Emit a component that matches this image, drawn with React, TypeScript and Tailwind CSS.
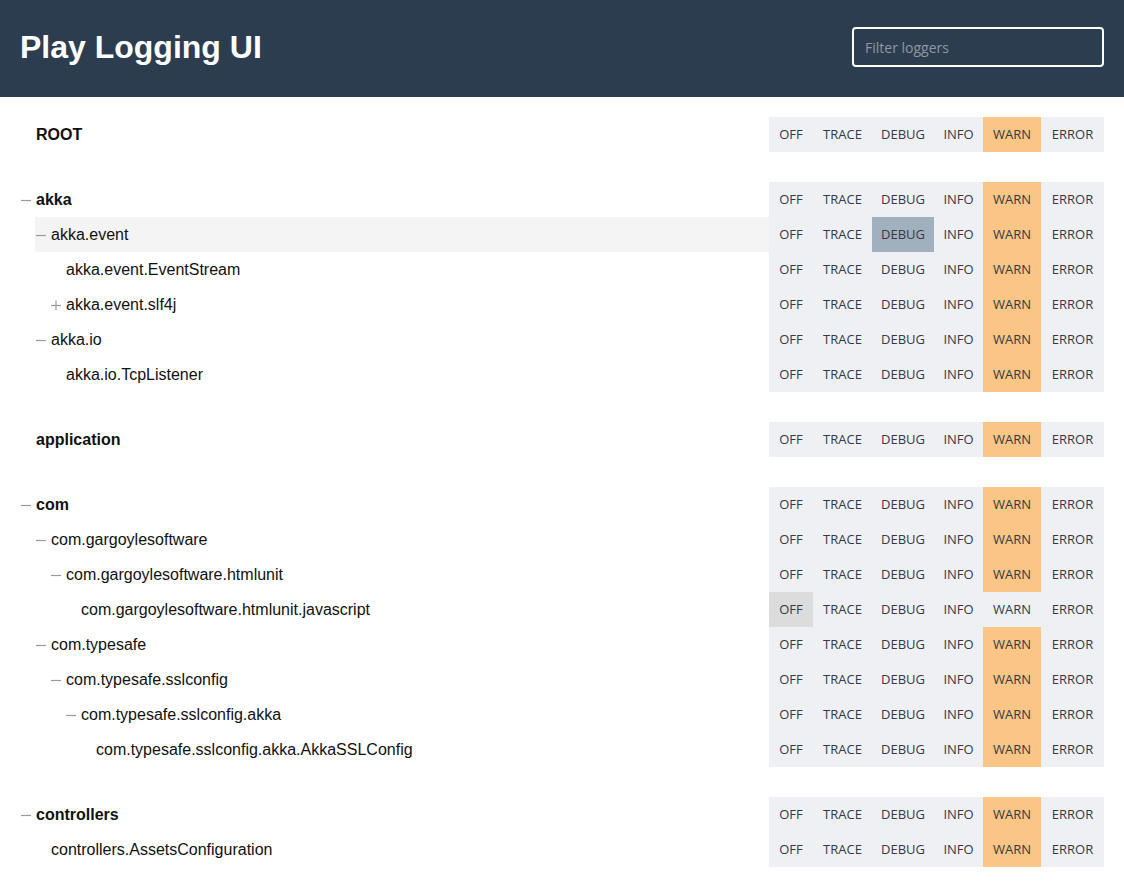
import React from 'react'

type Level = 'OFF' | 'TRACE' | 'DEBUG' | 'INFO' | 'WARN' | 'ERROR'

const LEVELS: { name: Level; w: string }[] = [
  { name: 'OFF', w: 'w-[44px]' },
  { name: 'TRACE', w: 'w-[59px]' },
  { name: 'DEBUG', w: 'w-[62px]' },
  { name: 'INFO', w: 'w-[49px]' },
  { name: 'WARN', w: 'w-[58px]' },
  { name: 'ERROR', w: 'w-[63px]' },
]

type Logger = {
  name: string
  depth: number
  toggle?: 'minus' | 'plus'
  level: Level
  effective?: Level
  hover?: boolean
}

const groups: Logger[][] = [
  [{ name: 'ROOT', depth: 0, level: 'WARN' }],
  [
    { name: 'akka', depth: 0, toggle: 'minus', level: 'WARN' },
    { name: 'akka.event', depth: 1, toggle: 'minus', level: 'WARN', effective: 'DEBUG', hover: true },
    { name: 'akka.event.EventStream', depth: 2, level: 'WARN' },
    { name: 'akka.event.slf4j', depth: 2, toggle: 'plus', level: 'WARN' },
    { name: 'akka.io', depth: 1, toggle: 'minus', level: 'WARN' },
    { name: 'akka.io.TcpListener', depth: 2, level: 'WARN' },
  ],
  [{ name: 'application', depth: 0, level: 'WARN' }],
  [
    { name: 'com', depth: 0, toggle: 'minus', level: 'WARN' },
    { name: 'com.gargoylesoftware', depth: 1, toggle: 'minus', level: 'WARN' },
    { name: 'com.gargoylesoftware.htmlunit', depth: 2, toggle: 'minus', level: 'WARN' },
    { name: 'com.gargoylesoftware.htmlunit.javascript', depth: 3, level: 'OFF' },
    { name: 'com.typesafe', depth: 1, toggle: 'minus', level: 'WARN' },
    { name: 'com.typesafe.sslconfig', depth: 2, toggle: 'minus', level: 'WARN' },
    { name: 'com.typesafe.sslconfig.akka', depth: 3, toggle: 'minus', level: 'WARN' },
    { name: 'com.typesafe.sslconfig.akka.AkkaSSLConfig', depth: 4, level: 'WARN' },
  ],
  [
    { name: 'controllers', depth: 0, toggle: 'minus', level: 'WARN' },
    { name: 'controllers.AssetsConfiguration', depth: 1, level: 'WARN' },
  ],
]

const indent = ['ml-0', 'ml-[15px]', 'ml-[30px]', 'ml-[45px]', 'ml-[60px]']

function Toggle({ kind }: { kind?: 'minus' | 'plus' }) {
  return (
    <span className="flex w-[16px] shrink-0 items-center pl-[1px]">
      {kind && (
        <svg width="10" height="10" viewBox="0 0 10 10" className="mt-[1px]">
          <path d="M0 5.5h10" stroke="#9a9a9a" strokeWidth="1.2" />
          {kind === 'plus' && <path d="M5 0.5v10" stroke="#9a9a9a" strokeWidth="1.2" />}
        </svg>
      )}
    </span>
  )
}

function LevelButtons({ level, effective }: { level: Level; effective?: Level }) {
  return (
    <div className="flex h-[35px] bg-[#eff0f4] font-['Open_Sans',sans-serif] text-[13px] text-[#343a44]">
      {LEVELS.map(({ name, w }) => {
        let bg = ''
        if (name === level) bg = name === 'OFF' ? 'bg-[#dcdcdc]' : 'bg-[#fbc585]'
        if (name === effective) bg = 'bg-[#a1b0bf]'
        return (
          <span key={name} className={`flex items-center justify-center ${w} ${bg}`}>
            {name}
          </span>
        )
      })}
    </div>
  )
}

function Row({ logger }: { logger: Logger }) {
  const bold = logger.depth === 0
  return (
    <div className="flex items-stretch">
      <div
        className={`flex flex-1 items-center ${indent[logger.depth]} ${logger.hover ? 'bg-[#f4f4f4]' : ''}`}
      >
        <Toggle kind={logger.toggle} />
        <span className={`text-[16px] text-[#111] ${bold ? 'font-bold' : ''}`}>{logger.name}</span>
      </div>
      <LevelButtons level={logger.level} effective={logger.effective} />
    </div>
  )
}

export default function App() {
  return (
    <div className="min-h-[888px] bg-white font-['Liberation_Sans',Arial,sans-serif]">
      <header className="flex h-[97px] items-center justify-between bg-[#2d3d50] px-5 pb-[3px]">
        <h1 className="text-[32px] font-bold text-white">Play Logging UI</h1>
        <input
          placeholder="Filter loggers"
          className="h-[40px] w-[252px] rounded-[4px] border-2 border-white bg-transparent px-[11px] font-['Open_Sans',sans-serif] text-[14px] text-white placeholder:text-[#8f98a2] outline-none"
        />
      </header>
      <main className="flex flex-col gap-[30px] px-5 pt-5">
        {groups.map((g, i) => (
          <div key={i} className="flex flex-col">
            {g.map((l) => (
              <Row key={l.name} logger={l} />
            ))}
          </div>
        ))}
      </main>
    </div>
  )
}
